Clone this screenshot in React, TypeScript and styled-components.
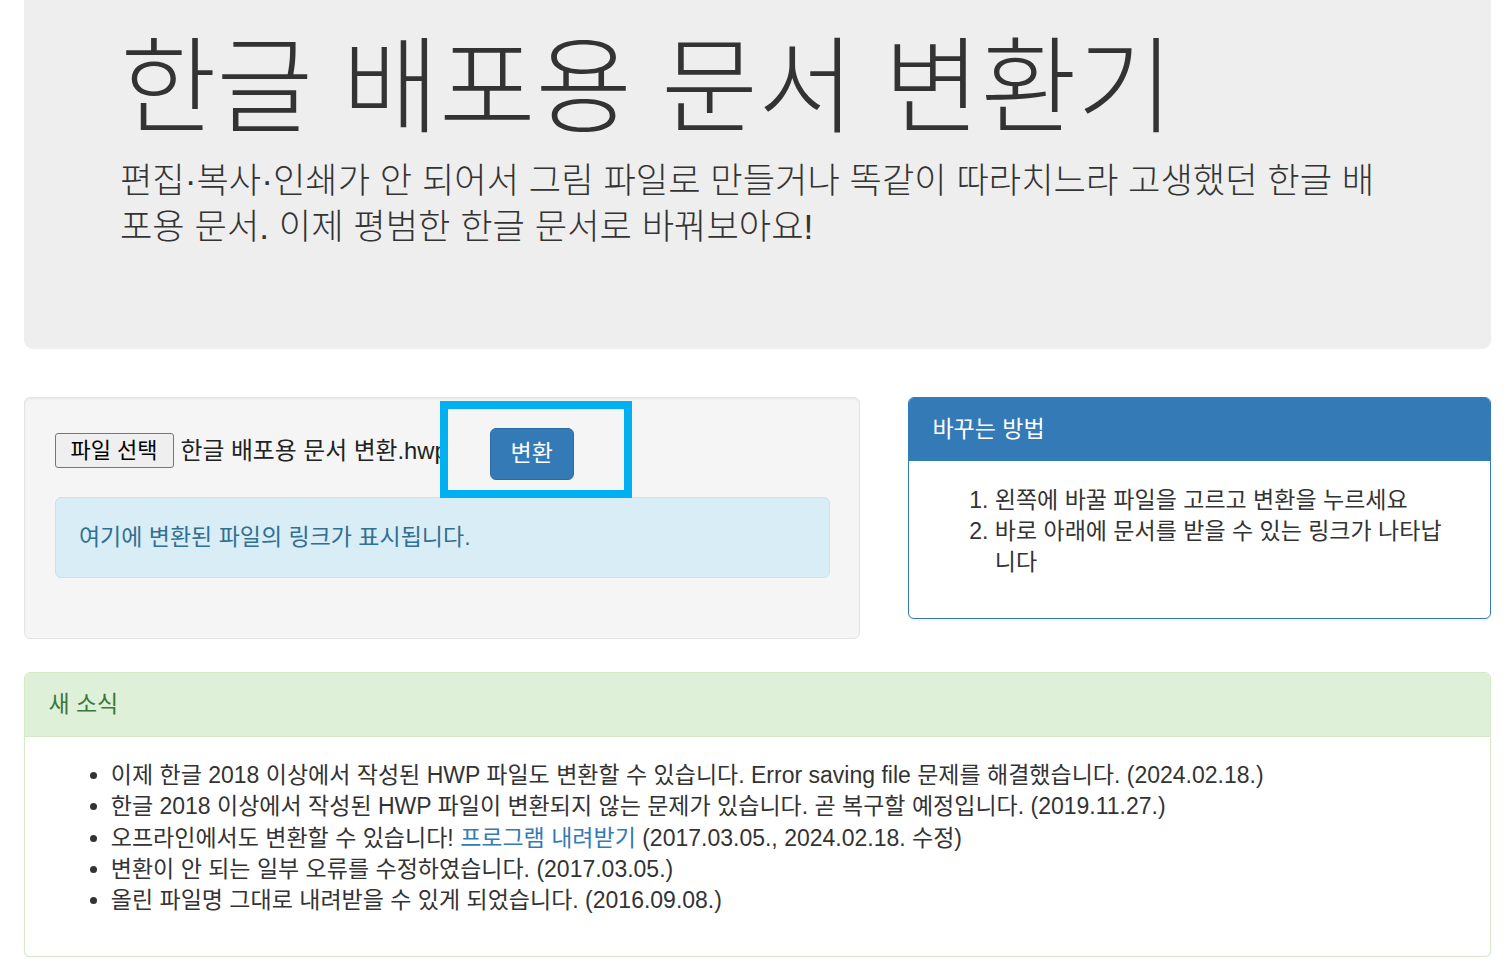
import React from "react";
import styled, { createGlobalStyle } from "styled-components";

const GlobalStyle = createGlobalStyle`
  html, body {
    margin: 0;
    padding: 0;
    background: #ffffff;
  }
  body {
    font-family: "Liberation Sans", "Noto Sans CJK KR", sans-serif;
    font-size: 23px;
    line-height: 1.42857;
    color: #333333;
  }
  * { box-sizing: border-box; }
`;

const Page = styled.div`
  padding: 0 21px 0 24px;
`;

const Jumbotron = styled.header`
  background: #eeeeee;
  border-radius: 0 0 9px 9px;
  padding: 29.5px 106px 99px 96px;
`;

const Title = styled.h1`
  margin: 0 0 13px;
  font-size: 105px;
  line-height: 1.1;
  font-weight: 300;
  color: #333333;
  white-space: nowrap;
`;

const Lead = styled.p`
  margin: 0;
  font-size: 35.2px;
  line-height: 46px;
  font-weight: 300;
  color: #333333;
`;

const Row = styled.div`
  display: grid;
  grid-template-columns: 836px 1fr;
  column-gap: 48px;
  align-items: start;
  margin-top: 48px;
`;

const Well = styled.section`
  position: relative;
  background: #f5f5f5;
  border: 1.5px solid #e3e3e3;
  border-radius: 6px;
  box-shadow: inset 0 1.5px 1.5px rgba(0, 0, 0, 0.05);
  padding: 29.5px;
`;

const FormRow = styled.form`
  display: flex;
  align-items: center;
  height: 52px;
  margin: 0;
`;

const FileInput = styled.div`
  display: flex;
  align-items: center;
  width: 390px;
  overflow: hidden;
  white-space: nowrap;
  margin-top: -6px;
`;

const FileButton = styled.button`
  flex: none;
  height: 35px;
  padding: 0 15px;
  font-family: "Liberation Sans", "Noto Sans CJK KR", sans-serif;
  font-size: 22px;
  line-height: 32px;
  color: #000000;
  background: #efefef;
  border: 1.5px solid #767676;
  border-radius: 3px;
`;

const FileName = styled.span`
  margin-left: 7px;
  font-size: 23.8px;
  color: #222222;
`;

const PrimaryButton = styled.button`
  flex: none;
  height: 52px;
  margin-left: 45px;
  padding: 0 20px;
  font-family: "Liberation Sans", "Noto Sans CJK KR", sans-serif;
  font-size: 23px;
  line-height: 31px;
  color: #ffffff;
  background: #337ab7;
  border: 1.5px solid #2e6da4;
  border-radius: 6px;
`;

const Alert = styled.div`
  margin: 17px 0 31px;
  padding: 24px 23.4px;
  background: #d9edf7;
  border: 1.5px solid #bce8f1;
  border-radius: 6px;
  color: #31708f;
  line-height: 31.3px;
`;

const HighlightBox = styled.div`
  position: absolute;
  top: 2.5px;
  left: 414.5px;
  width: 192px;
  height: 97px;
  border: 8px solid #00b0f0;
  pointer-events: none;
`;

type Variant = "primary" | "success";

const panelColors: Record<Variant, { border: string; bg: string; fg: string }> = {
  primary: { border: "#337ab7", bg: "#337ab7", fg: "#ffffff" },
  success: { border: "#d6e9c6", bg: "#dff0d8", fg: "#3c763d" },
};

const Panel = styled.section<{ $variant: Variant }>`
  background: #ffffff;
  border: 1.5px solid ${(p) => panelColors[p.$variant].border};
  border-radius: 6px;
  box-shadow: 0 1.5px 1.5px rgba(0, 0, 0, 0.05);
  overflow: hidden;
`;

const PanelHeading = styled.div<{ $variant: Variant }>`
  padding: 15.6px 23.4px;
  background: ${(p) => panelColors[p.$variant].bg};
  color: ${(p) => panelColors[p.$variant].fg};
  border-bottom: 1.5px solid ${(p) => panelColors[p.$variant].border};
  font-size: 23px;
  line-height: 31.3px;
`;

const PanelBody = styled.div`
  padding: 23.4px;
`;

const OrderedList = styled.ol`
  margin: 0 0 15.6px;
  padding: 0 10px 0 62.4px;
  line-height: 31.3px;
`;

const BulletList = styled.ul`
  margin: 0 0 15.6px;
  padding-left: 62.4px;
  line-height: 31.3px;
`;

const NewsPanel = styled(Panel)`
  margin-top: 33px;
`;

const Link = styled.a`
  color: #337ab7;
  text-decoration: none;
`;

export default function App() {
  return (
    <>
      <GlobalStyle />
      <Page>
        <Jumbotron>
          <Title>한글 배포용 문서 변환기</Title>
          <Lead>
            편집·복사·인쇄가 안 되어서 그림 파일로 만들거나 똑같이 따라치느라 고생했던 한글 배포용 문서. 이제 평범한 한글 문서로 바꿔보아요!
          </Lead>
        </Jumbotron>

        <Row>
          <Well>
            <FormRow onSubmit={(e) => e.preventDefault()}>
              <FileInput>
                <FileButton type="button">파일 선택</FileButton>
                <FileName>한글 배포용 문서 변환.hwp</FileName>
              </FileInput>
              <PrimaryButton type="submit">변환</PrimaryButton>
            </FormRow>
            <Alert>여기에 변환된 파일의 링크가 표시됩니다.</Alert>
            <HighlightBox />
          </Well>

          <Panel $variant="primary">
            <PanelHeading $variant="primary">바꾸는 방법</PanelHeading>
            <PanelBody>
              <OrderedList>
                <li>왼쪽에 바꿀 파일을 고르고 변환을 누르세요</li>
                <li>바로 아래에 문서를 받을 수 있는 링크가 나타납니다</li>
              </OrderedList>
            </PanelBody>
          </Panel>
        </Row>

        <NewsPanel $variant="success">
          <PanelHeading $variant="success">새 소식</PanelHeading>
          <PanelBody>
            <BulletList>
              <li>
                이제 한글 2018 이상에서 작성된 HWP 파일도 변환할 수 있습니다. Error saving file 문제를 해결했습니다. (2024.02.18.)
              </li>
              <li>
                한글 2018 이상에서 작성된 HWP 파일이 변환되지 않는 문제가 있습니다. 곧 복구할 예정입니다. (2019.11.27.)
              </li>
              <li>
                오프라인에서도 변환할 수 있습니다! <Link href="#">프로그램 내려받기</Link> (2017.03.05., 2024.02.18. 수정)
              </li>
              <li>변환이 안 되는 일부 오류를 수정하였습니다. (2017.03.05.)</li>
              <li>올린 파일명 그대로 내려받을 수 있게 되었습니다. (2016.09.08.)</li>
            </BulletList>
          </PanelBody>
        </NewsPanel>
      </Page>
    </>
  );
}
